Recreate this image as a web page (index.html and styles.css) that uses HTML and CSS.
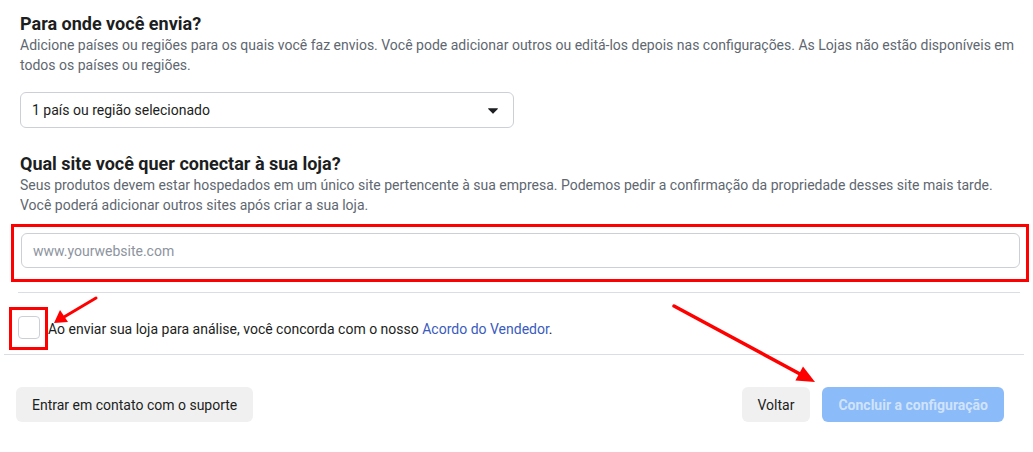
FILE: index.html
```html
<!DOCTYPE html>
<html lang="pt-BR">
<head>
    <meta charset="UTF-8">
    <meta name="viewport" content="width=device-width, initial-scale=1.0">
    <title>Configurar loja</title>
    <link rel="stylesheet" href="styles.css">
</head>
<body>
    <div class="page">
        <section class="block">
            <h2>Para onde você envia?</h2>
            <p class="desc">Adicione países ou regiões para os quais você faz envios. Você pode adicionar outros ou editá-los depois nas configurações. As Lojas não estão disponíveis em todos os países ou regiões.</p>
            <div class="select">
                <span>1 país ou região selecionado</span>
                <svg class="caret" width="10" height="6" viewBox="0 0 10 6"><path d="M0.5 0.3h9a0.4 0.4 0 0 1 0.3 0.6L5.3 5.6a0.4 0.4 0 0 1-0.6 0L0.2 0.9a0.4 0.4 0 0 1 0.3-0.6z" fill="#1c1e21"/></svg>
            </div>
        </section>

        <section class="block second">
            <h2>Qual site você quer conectar à sua loja?</h2>
            <p class="desc">Seus produtos devem estar hospedados em um único site pertencente à sua empresa. Podemos pedir a confirmação da propriedade desses site mais tarde. Você poderá adicionar outros sites após criar a sua loja.</p>
            <div class="mark site-mark">
                <input type="text" class="site" placeholder="www.yourwebsite.com">
            </div>
        </section>

        <hr class="sep sep-top">
        <div class="agree">
            <span class="mark box-mark"><span class="checkbox"></span></span>
            <span class="agree-text">Ao enviar sua loja para análise, você concorda com o nosso <a href="#">Acordo do Vendedor</a>.</span>
        </div>
        <hr class="sep sep-bottom">

        <div class="actions">
            <button class="btn">Entrar em contato com o suporte</button>
            <div class="right">
                <button class="btn">Voltar</button>
                <button class="btn primary" disabled>Concluir a configuração</button>
            </div>
        </div>
    </div>

    <svg class="arrows" width="1033" height="452" viewBox="0 0 1033 452">
        <line x1="96" y1="298" x2="64" y2="317" stroke="#ff0000" stroke-width="3" stroke-linecap="round"/>
        <polygon points="54,323 60,310 68,322" fill="#ff0000"/>
        <line x1="674" y1="306" x2="800" y2="374" stroke="#ff0000" stroke-width="3.5" stroke-linecap="round"/>
        <polygon points="815,382 795.4,380.5 803,366.5" fill="#ff0000"/>
    </svg>
</body>
</html>
```

FILE: styles.css
```css
:root {
    --text-color: #1c1e21;
    --muted-color: #606770;
    --border-color: #ccd0d5;
    --line-color: #dadde1;
    --button-bg: #f0f0f0;
    --mark-color: #ff0000;
}

body {
    margin: 0;
    font-family: Roboto, 'Liberation Sans', Arial, sans-serif;
    color: var(--text-color);
    background-color: #ffffff;
}

.page {
    padding: 13px 13px 0 20px;
}

h2 {
    margin: 0;
    font-size: 18px;
    line-height: 22px;
    font-weight: 700;
    color: var(--text-color);
}

.desc {
    margin: 0;
    max-width: 996px;
    font-size: 14px;
    line-height: 20px;
    color: var(--muted-color);
}

.select {
    display: flex;
    align-items: center;
    justify-content: space-between;
    box-sizing: border-box;
    width: 494px;
    height: 36px;
    margin-top: 17px;
    padding: 0 15px 0 11px;
    border: 1px solid var(--border-color);
    border-radius: 6px;
    font-size: 14px;
    color: var(--text-color);
}

.caret {
    margin-top: 1px;
}

.second {
    margin-top: 25px;
}

.mark {
    position: relative;
    display: block;
}

.mark::after {
    content: '';
    position: absolute;
    border: 3px solid var(--mark-color);
    pointer-events: none;
}

.site-mark {
    margin-top: 18px;
    margin-left: 1px;
}

.site-mark::after {
    top: -9px;
    right: -9px;
    bottom: -14px;
    left: -10px;
}

.site {
    display: block;
    box-sizing: border-box;
    width: 100%;
    height: 35px;
    padding: 0 11px;
    border: 1px solid var(--border-color);
    border-radius: 6px;
    font-family: inherit;
    font-size: 14px;
    color: var(--text-color);
}

.site::placeholder {
    color: #8d949e;
}

.sep {
    margin: 0;
    border: none;
    border-top: 1px solid var(--line-color);
}

.sep-top {
    margin: 24px 0 0 -2px;
}

.sep-bottom {
    margin: 0 -4px 0 -16px;
}

.agree {
    display: flex;
    align-items: center;
    gap: 8px;
    margin-left: -2px;
    padding: 23px 0 15px;
    font-size: 14px;
    line-height: 20px;
}

.box-mark {
    flex: none;
}

.box-mark::after {
    top: -9px;
    right: -8px;
    bottom: -11px;
    left: -9px;
}

.checkbox {
    display: block;
    width: 20px;
    height: 21px;
    border: 1px solid var(--border-color);
    border-radius: 4px;
}

.agree-text {
    margin-top: 2px;
}

.agree-text a {
    color: #3a5bc0;
    text-decoration: none;
}

.actions {
    display: flex;
    justify-content: space-between;
    margin: 32px 16px 0 -4px;
}

.right {
    display: flex;
    gap: 12px;
}

.btn {
    height: 35px;
    padding: 0 16px;
    border: none;
    border-radius: 6px;
    background-color: var(--button-bg);
    font-family: inherit;
    font-size: 14px;
    color: var(--text-color);
}

.btn.primary {
    background-color: #8bbbf8;
    color: rgba(255, 255, 255, 0.6);
    font-weight: 700;
}

.arrows {
    position: absolute;
    top: 0;
    left: 0;
    pointer-events: none;
}
```
